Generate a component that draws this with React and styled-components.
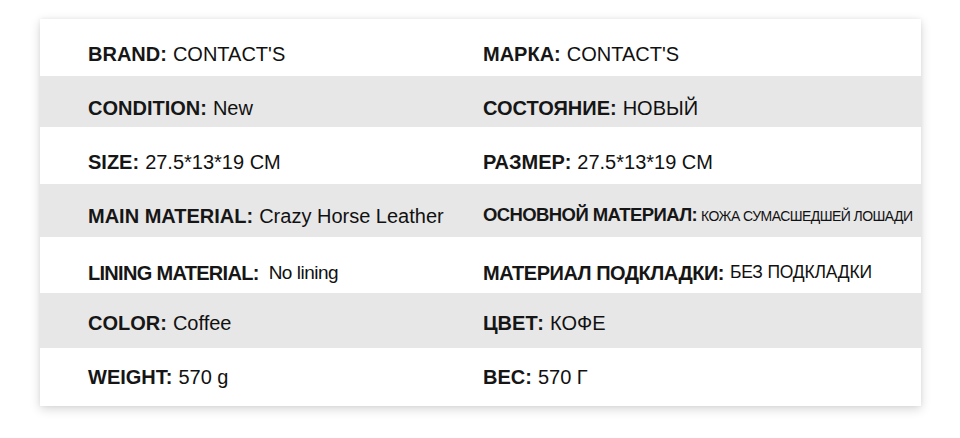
import styled, { createGlobalStyle } from "styled-components";

const GlobalStyle = createGlobalStyle`
  html, body {
    margin: 0;
    padding: 0;
    background: #ffffff;
  }
  body {
    font-family: "Liberation Sans", Arial, sans-serif;
    color: #111;
  }
`;

// outer page, holds the spec card
const Page = styled.div`
  width: 960px;
  height: 438px;
  padding: 19px 0 0 40px;
  box-sizing: border-box;
`;

const Card = styled.div`
  width: 881px;
  background: #fff;
  box-shadow: 0 3px 10px rgba(0, 0, 0, 0.16), 0 0 4px rgba(0, 0, 0, 0.05);
`;

const Row = styled.div`
  display: grid;
  grid-template-columns: 443px 1fr;
  height: ${(p) => p.$h}px;
  background: ${(p) => (p.$grey ? "#e7e7e7" : "#ffffff")};
`;

const Cell = styled.div`
  display: flex;
  align-items: center;
  padding-left: ${(p) => (p.$right ? 0 : 48)}px;
  padding-top: ${(p) => p.$shift}px;
  white-space: nowrap;
  font-size: 20px;
  line-height: 1;
`;

const Label = styled.span`
  font-weight: 700;
  color: #161616;
  font-size: ${(p) => p.$size || 20}px;
  letter-spacing: ${(p) => p.$ls || 0}px;
  margin-right: ${(p) => p.$gap || 6}px;
`;

const Value = styled.span`
  font-weight: 400;
  font-size: ${(p) => p.$size || 20}px;
  letter-spacing: ${(p) => p.$ls || 0}px;
`;

const rows = [
  {
    h: 57,
    shift: 13,
    en: { label: "BRAND:", value: "CONTACT'S" },
    ru: { label: "МАРКА:", value: "CONTACT'S" },
  },
  {
    h: 51,
    shift: 12,
    en: { label: "CONDITION:", value: "New" },
    ru: { label: "СОСТОЯНИЕ:", value: "НОВЫЙ" },
  },
  {
    h: 57,
    shift: 12,
    en: { label: "SIZE:", value: "27.5*13*19 CM" },
    ru: { label: "РАЗМЕР:", value: "27.5*13*19 CM" },
  },
  {
    h: 53,
    shift: 10,
    en: { label: "MAIN MATERIAL:", value: "Crazy Horse Leather" },
    ru: {
      label: "ОСНОВНОЙ МАТЕРИАЛ:",
      labelSize: 18.5,
      labelLs: -0.6,
      gap: 4,
      value: "КОЖА СУМАСШЕДШЕЙ ЛОШАДИ",
      valueSize: 14,
      valueLs: -0.55,
    },
  },
  {
    h: 56,
    shift: 15,
    en: {
      label: "LINING MATERIAL:",
      labelLs: -0.7,
      gap: 10,
      value: "No lining",
      valueSize: 19,
      valueLs: -0.5,
    },
    ru: {
      label: "МАТЕРИАЛ ПОДКЛАДКИ:",
      labelLs: -0.5,
      value: "БЕЗ ПОДКЛАДКИ",
      valueSize: 17.5,
      valueLs: -0.2,
    },
  },
  {
    h: 55,
    shift: 4,
    en: { label: "COLOR:", value: "Coffee" },
    ru: { label: "ЦВЕТ:", value: "КОФЕ" },
  },
  {
    h: 58,
    shift: 0,
    en: { label: "WEIGHT:", value: "570 g" },
    ru: { label: "ВЕС:", value: "570 Г" },
  },
];

function SpecCell({ item, right, shift }) {
  return (
    <Cell $right={right} $shift={shift}>
      <Label $size={item.labelSize} $ls={item.labelLs} $gap={item.gap}>
        {item.label}
      </Label>
      <Value $size={item.valueSize} $ls={item.valueLs}>
        {item.value}
      </Value>
    </Cell>
  );
}

export default function App() {
  return (
    <Page>
      <GlobalStyle />
      <Card>
        {rows.map((r, i) => (
          <Row key={i} $h={r.h} $grey={i % 2 === 1}>
            <SpecCell item={r.en} shift={r.shift} />
            <SpecCell item={r.ru} shift={r.shift} right />
          </Row>
        ))}
      </Card>
    </Page>
  );
}
